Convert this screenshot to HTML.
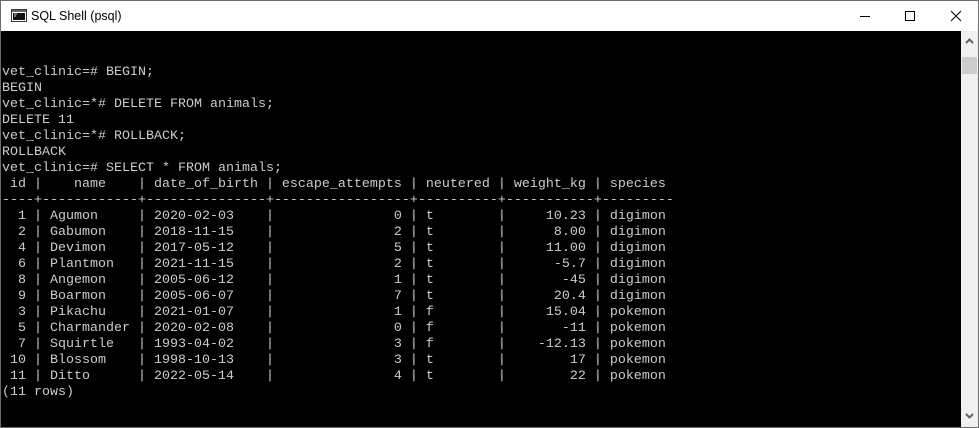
<!DOCTYPE html>
<html><head><meta charset="utf-8"><style>
*{margin:0;padding:0;box-sizing:border-box}
html,body{width:979px;height:428px;overflow:hidden;background:#fff}
#win{position:absolute;left:0;top:0;width:979px;height:428px;border:1px solid #6b6b6b;background:#fff}
#title{position:absolute;left:0;top:0;width:977px;height:30px;background:#fff}
#title .t{position:absolute;left:30px;top:8px;font:12.5px "Liberation Sans",sans-serif;color:#000}
#term{position:absolute;left:0;top:30px;width:960px;height:396px;background:#000}
pre{position:absolute;left:1px;top:48px;font:13.33px/16px "Liberation Mono",monospace;color:#cccccc;white-space:pre}
#sb{position:absolute;left:960px;top:30px;width:17px;height:396px;background:#f0f0f0}
#thumb{position:absolute;left:1px;top:26px;width:15px;height:17px;background:#cdcdcd}
</style></head><body>
<div id="win">
<div id="title">
<svg style="position:absolute;left:10px;top:8px" width="16" height="13" viewBox="0 0 16 13"><rect x="0.5" y="0.5" width="15" height="12" fill="#fff" stroke="#333"/><rect x="1" y="1" width="14" height="2" fill="#666"/><rect x="2" y="4" width="12" height="7" fill="#111"/><path d="M3 5h3M3 7h2" stroke="#ccc"/></svg>
<span class="t">SQL Shell (psql)</span>
<svg style="position:absolute;left:855px;top:8px" width="110" height="14" viewBox="0 0 110 14"><path d="M4 7.5h10" stroke="#000"/><rect x="49.5" y="2.5" width="9" height="9" fill="none" stroke="#000"/><path d="M95 2l10 10M105 2l-10 10" stroke="#000"/></svg>
</div>
<div id="term"></div>
<div id="sb"><svg style="position:absolute;left:4px;top:7px" width="9" height="6"><path d="M1 5l3.5-3.5L8 5" stroke="#606060" stroke-width="2" fill="none"/></svg><div id="thumb"></div><svg style="position:absolute;left:4px;top:382px" width="9" height="6"><path d="M1 1l3.5 3.5L8 1" stroke="#606060" stroke-width="2" fill="none"/></svg></div>
<pre>

vet_clinic=# BEGIN;
BEGIN
vet_clinic=*# DELETE FROM animals;
DELETE 11
vet_clinic=*# ROLLBACK;
ROLLBACK
vet_clinic=# SELECT * FROM animals;
 id |    name    | date_of_birth | escape_attempts | neutered | weight_kg | species
----+------------+---------------+-----------------+----------+-----------+---------
  1 | Agumon     | 2020-02-03    |               0 | t        |     10.23 | digimon
  2 | Gabumon    | 2018-11-15    |               2 | t        |      8.00 | digimon
  4 | Devimon    | 2017-05-12    |               5 | t        |     11.00 | digimon
  6 | Plantmon   | 2021-11-15    |               2 | t        |      -5.7 | digimon
  8 | Angemon    | 2005-06-12    |               1 | t        |       -45 | digimon
  9 | Boarmon    | 2005-06-07    |               7 | t        |      20.4 | digimon
  3 | Pikachu    | 2021-01-07    |               1 | f        |     15.04 | pokemon
  5 | Charmander | 2020-02-08    |               0 | f        |       -11 | pokemon
  7 | Squirtle   | 1993-04-02    |               3 | f        |    -12.13 | pokemon
 10 | Blossom    | 1998-10-13    |               3 | t        |        17 | pokemon
 11 | Ditto      | 2022-05-14    |               4 | t        |        22 | pokemon
(11 rows)
</pre>
</div>
</body></html>
